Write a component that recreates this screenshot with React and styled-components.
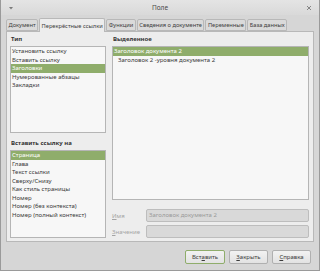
import React from 'react';
import styled, { createGlobalStyle } from 'styled-components';

const GlobalStyle = createGlobalStyle`
  html, body {
    margin: 0;
    padding: 0;
    background: #d6d6d6;
  }
  body {
    font-family: "Noto Sans", "DejaVu Sans", sans-serif;
    font-size: 6px;
    color: #3c3c3c;
  }
`;

const Window = styled.div`
  width: 320px;
  height: 271px;
  box-sizing: border-box;
  border: 1px solid #9a9a9a;
  border-top: none;
  background: #d6d6d6;
  display: flex;
  flex-direction: column;
`;

const TitleBar = styled.div`
  height: 15px;
  flex: none;
  display: flex;
  align-items: center;
  justify-content: space-between;
  padding: 0 7px;
  background: linear-gradient(#e4e4e4, #d9d9d9);
  color: #4a4a4a;
  font-size: 6.5px;
`;

const TitleText = styled.div`
  flex: 1;
  text-align: center;
`;

const Tabs = styled.div`
  display: flex;
  align-items: flex-end;
  gap: 1px;
  height: 15px;
  padding: 0 5px;
  margin-top: 1px;
`;

const Tab = styled.div`
  height: ${(p) => (p.$active ? '14px' : '12px')};
  box-sizing: border-box;
  padding: 0 1.5px;
  display: flex;
  align-items: center;
  font-size: 5.7px;
  border: 1px solid #b8b8b8;
  border-bottom: ${(p) => (p.$active ? 'none' : '1px solid #b8b8b8')};
  border-radius: 2px 2px 0 0;
  background: ${(p) => (p.$active ? '#ededed' : '#dadada')};
  color: #3c3c3c;
  white-space: nowrap;
  position: relative;
  top: ${(p) => (p.$active ? '1px' : '0')};
`;

const Panel = styled.div`
  margin: 0 5px 0 5px;
  height: 211px;
  box-sizing: border-box;
  border: 1px solid #b8b8b8;
  background: #ededed;
  padding: 3px 4px 3px 3px;
  display: grid;
  grid-template-columns: 96px 1fr;
  column-gap: 6px;
`;

const Column = styled.div`
  display: flex;
  flex-direction: column;
  min-width: 0;
`;

const Label = styled.div`
  font-weight: bold;
  color: #333;
  height: 11px;
  line-height: 9px;
  padding-left: 1px;
  margin-top: ${(p) => p.$top || 0}px;
`;

const ListBox = styled.div`
  box-sizing: border-box;
  border: 1px solid #b5b5b5;
  background: #f7f7f7;
  height: ${(p) => (p.$h ? `${p.$h}px` : 'auto')};
  flex: ${(p) => (p.$h ? 'none' : '1')};
  overflow: hidden;
`;

const Item = styled.div`
  height: 8.5px;
  line-height: 8.5px;
  padding-left: ${(p) => (p.$indent ? 5 : 1)}px;
  white-space: nowrap;
  background: ${(p) => (p.$selected ? '#8fad6b' : 'transparent')};
  color: ${(p) => (p.$selected ? '#ffffff' : '#3a3a3a')};
`;

const Form = styled.div`
  display: flex;
  flex-direction: column;
  gap: 3px;
  margin-top: 9px;
`;

const FormRow = styled.div`
  display: flex;
  align-items: center;
`;

const FieldLabel = styled.div`
  width: 34px;
  flex: none;
  color: #a4a4a4;
`;

const Field = styled.div`
  flex: 1;
  height: 13px;
  box-sizing: border-box;
  border: 1px solid #bdbdbd;
  border-radius: 2px;
  background: #d9d9d9;
  color: #9a9a9a;
  padding-left: 2px;
  line-height: 11px;
  white-space: nowrap;
`;

const Footer = styled.div`
  display: flex;
  justify-content: flex-end;
  gap: 4px;
  padding: 8px 8px 0 0;
`;

const Button = styled.div`
  width: ${(p) => p.$w}px;
  height: 14px;
  box-sizing: border-box;
  border: 1px solid ${(p) => (p.$default ? '#8fad6b' : '#b0b0b0')};
  border-radius: 2px;
  background: linear-gradient(#f2f2f2, #e2e2e2);
  display: flex;
  align-items: center;
  justify-content: center;
  color: #3c3c3c;
`;

const U = styled.span`
  text-decoration: underline;
`;

const tabs = [
  'Документ',
  'Перекрёстные ссылки',
  'Функции',
  'Сведения о документе',
  'Переменные',
  'База данных',
];

const types = [
  'Установить ссылку',
  'Вставить ссылку',
  'Заголовки',
  'Нумерованные абзацы',
  'Закладки',
];

const refs = [
  'Страница',
  'Глава',
  'Текст ссылки',
  'Сверху/Снизу',
  'Как стиль страницы',
  'Номер',
  'Номер (без контекста)',
  'Номер (полный контекст)',
];

export default function App() {
  return (
    <>
      <GlobalStyle />
      <Window>
        <TitleBar>
          <svg width="6" height="6" viewBox="0 0 6 6">
            <path d="M1 2 L5 2 L3 4.5 Z" fill="#7a7a7a" />
          </svg>
          <TitleText>Поле</TitleText>
          <svg width="6" height="6" viewBox="0 0 6 6">
            <path d="M1 1 L5 5 M5 1 L1 5" stroke="#7a7a7a" strokeWidth="0.9" />
          </svg>
        </TitleBar>

        <Tabs>
          {tabs.map((t, i) => (
            <Tab key={t} $active={i === 1}>{t}</Tab>
          ))}
        </Tabs>

        <Panel>
          <Column>
            <Label>Тип</Label>
            <ListBox $h={87}>
              {types.map((t, i) => (
                <Item key={t} $selected={i === 2}>{t}</Item>
              ))}
            </ListBox>
            <Label $top={6}>Вставить ссылку на</Label>
            <ListBox>
              {refs.map((t, i) => (
                <Item key={t} $selected={i === 0}>{t}</Item>
              ))}
            </ListBox>
          </Column>

          <Column>
            <Label>Выделенное</Label>
            <ListBox>
              <Item $selected>Заголовок документа 2</Item>
              <Item $indent>Заголовок 2 -уровня документа 2</Item>
            </ListBox>
            <Form>
              <FormRow>
                <FieldLabel><U>И</U>мя</FieldLabel>
                <Field>Заголовок документа 2</Field>
              </FormRow>
              <FormRow>
                <FieldLabel><U>З</U>начение</FieldLabel>
                <Field />
              </FormRow>
            </Form>
          </Column>
        </Panel>

        <Footer>
          <Button $w={40} $default>Вст<U>а</U>вить</Button>
          <Button $w={39}><U>З</U>акрыть</Button>
          <Button $w={39}><U>С</U>правка</Button>
        </Footer>
      </Window>
    </>
  );
}
